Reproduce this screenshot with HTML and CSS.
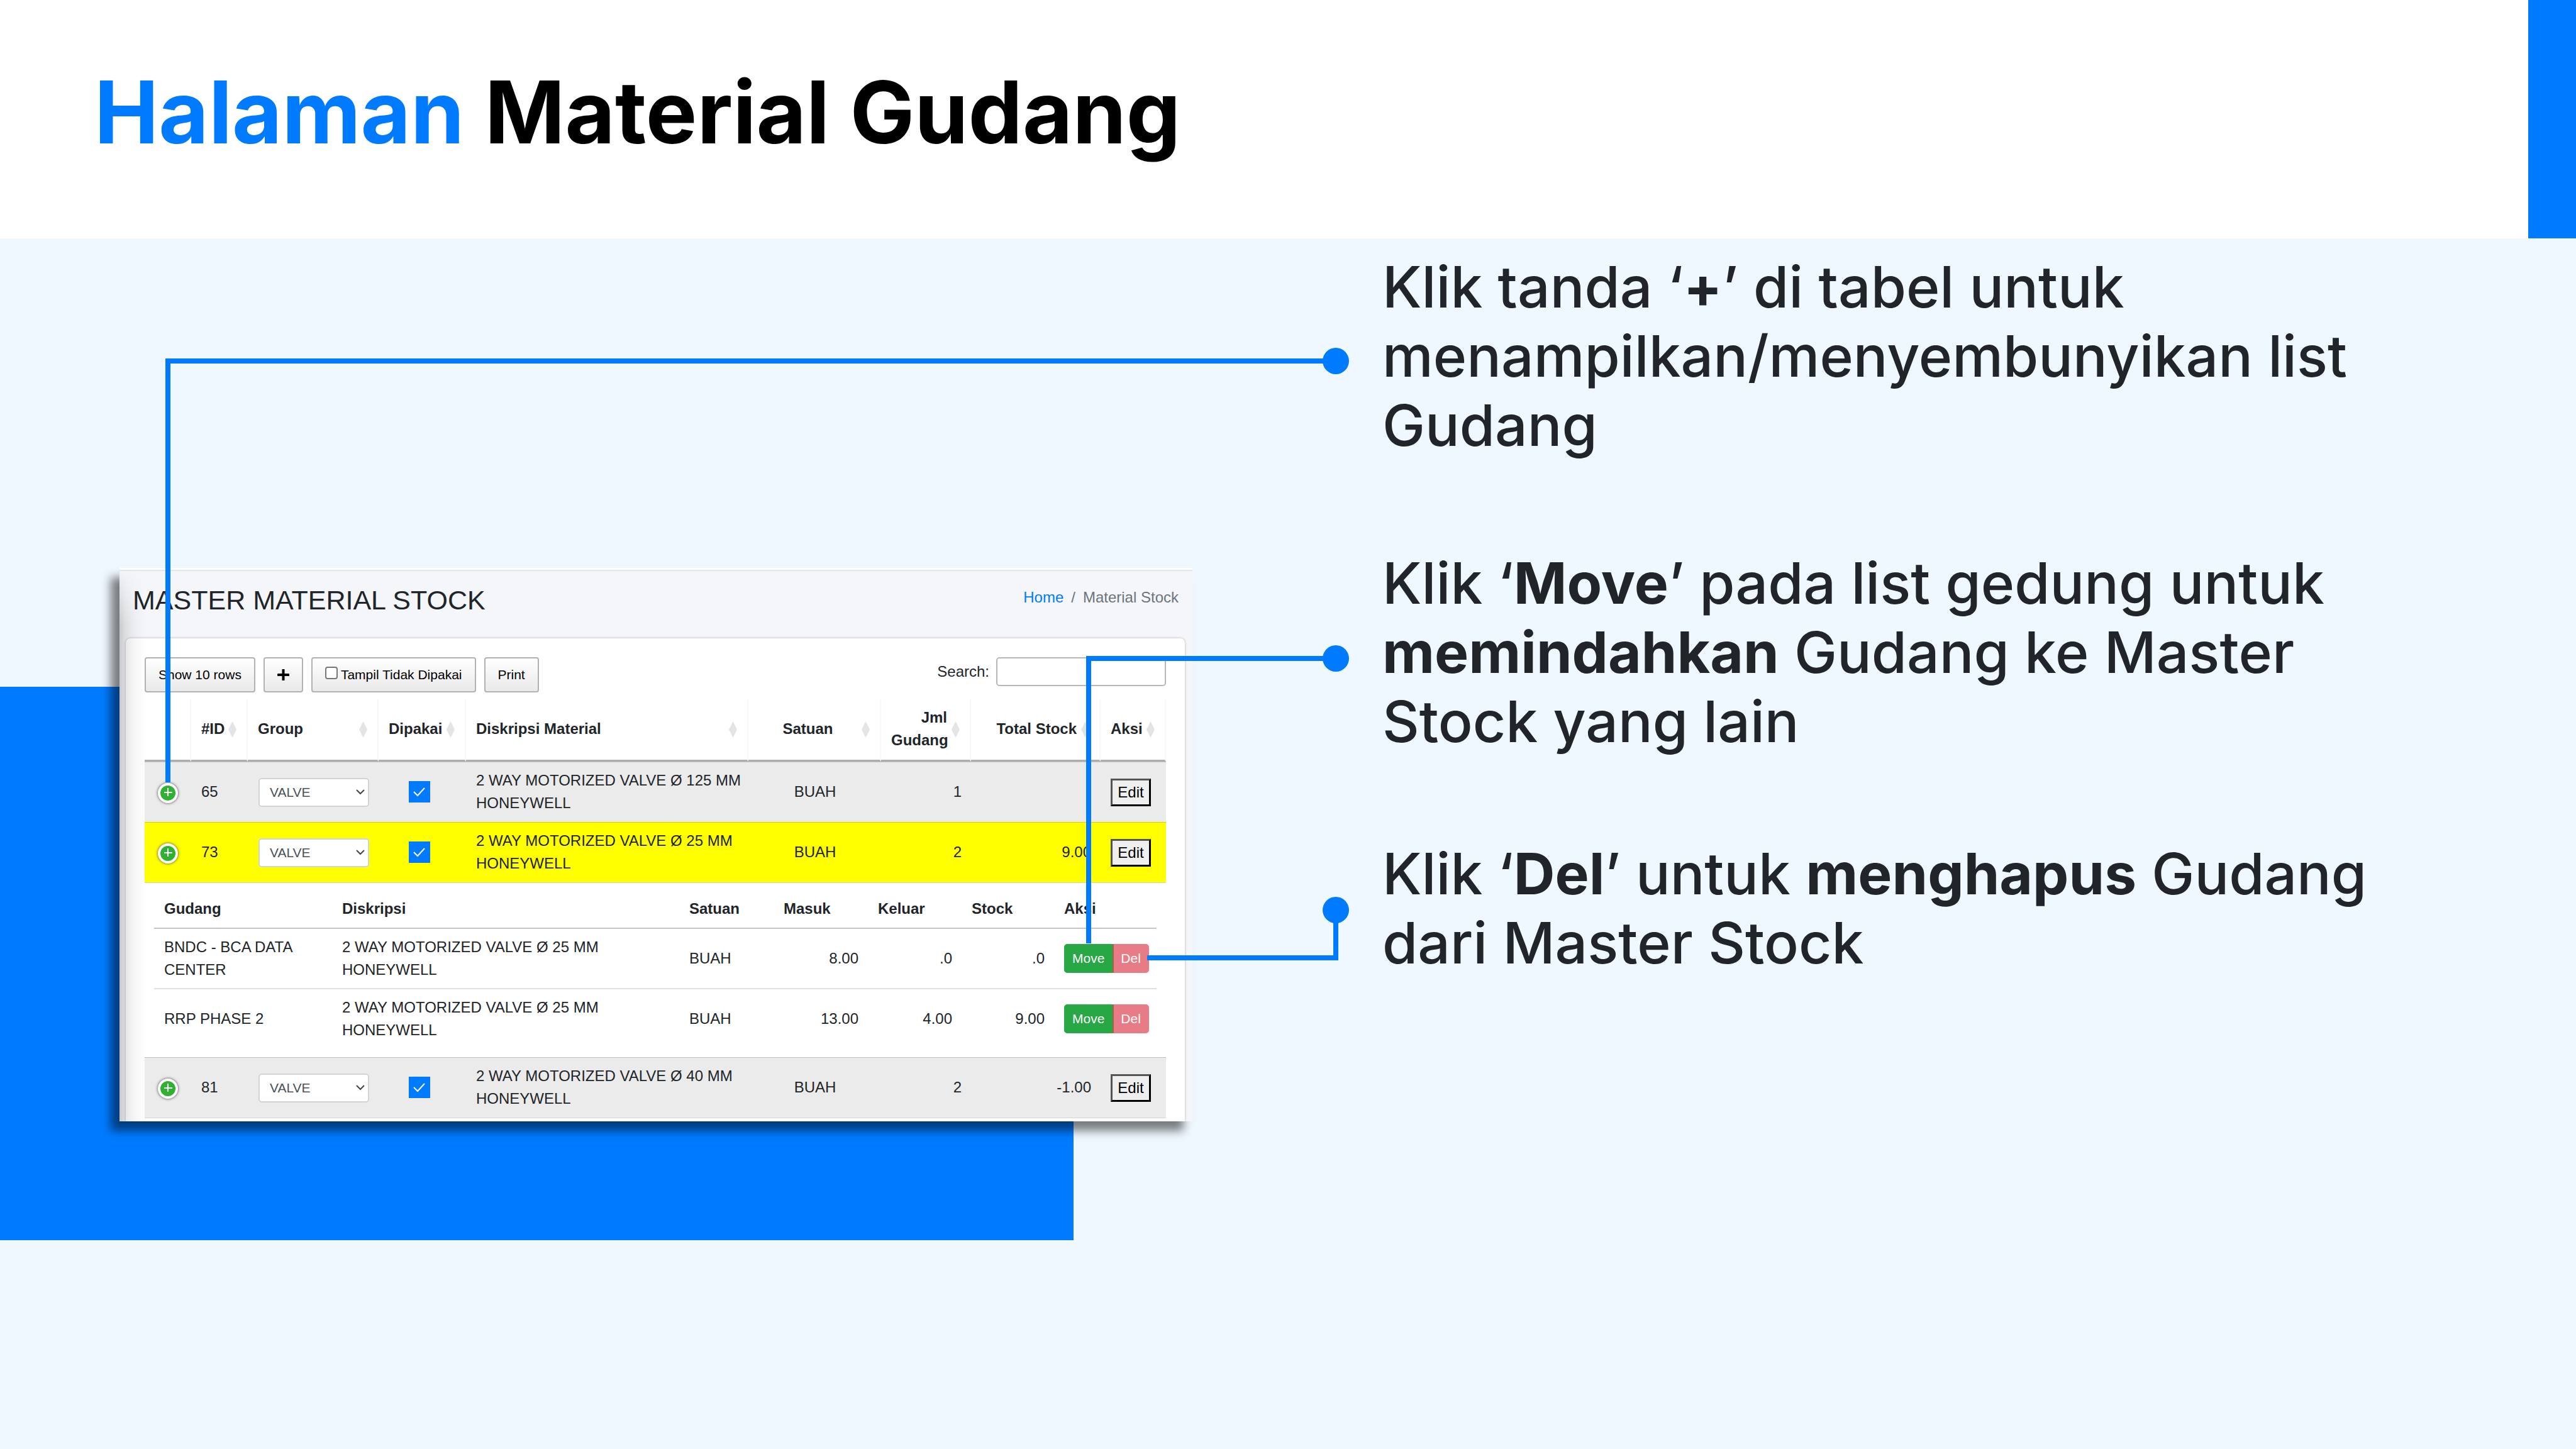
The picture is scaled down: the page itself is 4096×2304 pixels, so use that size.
FILE: index.html
```html
<!DOCTYPE html>
<html lang="id">
<head>
<meta charset="utf-8">
<title>Halaman Material Gudang</title>
<link rel="stylesheet" href="styles.css">
</head>
<body>
<div class="slide">
  <header class="slide-header">
    <h1 class="slide-title"><span class="accent">Halaman</span> Material Gudang</h1>
    <div class="header-block"></div>
  </header>

  <main class="slide-body">
    <div class="backdrop"></div>

    <section class="app">
      <div class="app-header">
        <h2 class="app-title">MASTER MATERIAL STOCK</h2>
        <nav class="breadcrumb" aria-label="Breadcrumb">
          <a href="#">Home</a><span>/</span><span>Material Stock</span>
        </nav>
      </div>

      <div class="card">
        <div class="toolbar">
          <div class="tools">
            <button class="tool" type="button">Show 10 rows</button>
            <button class="tool" type="button" aria-label="Tambah"><svg class="plus" viewBox="0 0 18 18"><path d="M9 1v16M1 9h16" stroke="#000" stroke-width="4" stroke-linecap="round"/></svg></button>
            <label class="tool"><input class="tool-check" type="checkbox">Tampil Tidak Dipakai</label>
            <button class="tool" type="button">Print</button>
          </div>
          <label class="search">Search:<input class="search-input" type="search"></label>
        </div>

        <table class="stock">
          <colgroup>
            <col class="c-toggle"><col class="c-id"><col class="c-group"><col class="c-used"><col class="c-desc"><col class="c-unit"><col class="c-count"><col class="c-total"><col class="c-action">
          </colgroup>
          <thead>
            <tr>
              <th></th>
              <th class="sortable">#ID</th>
              <th class="sortable">Group</th>
              <th class="sortable">Dipakai</th>
              <th class="sortable">Diskripsi Material</th>
              <th class="sortable center">Satuan</th>
              <th class="sortable right">Jml Gudang</th>
              <th class="sortable right">Total Stock</th>
              <th class="sortable">Aksi</th>
            </tr>
          </thead>
          <tbody>
            <tr class="shaded">
              <td class="toggle-cell"><button class="toggle" type="button" aria-label="Tampilkan gudang"><svg viewBox="0 0 24 24"><path d="M12 4v13M6 11h13" stroke="#fff" stroke-width="2"/></svg></button></td>
              <td>65</td>
              <td class="tight"><select class="group-select" aria-label="Group"><option>VALVE</option></select></td>
              <td class="used-cell"><input class="used" type="checkbox" checked aria-label="Dipakai"></td>
              <td class="desc">2 WAY MOTORIZED VALVE Ø 125 MM HONEYWELL</td>
              <td class="center">BUAH</td>
              <td class="right">1</td>
              <td class="right"></td>
              <td class="tight"><button class="edit" type="button">Edit</button></td>
            </tr>
            <tr class="selected">
              <td class="toggle-cell"><button class="toggle" type="button" aria-label="Tampilkan gudang"><svg viewBox="0 0 24 24"><path d="M12 4v13M6 11h13" stroke="#fff" stroke-width="2"/></svg></button></td>
              <td>73</td>
              <td class="tight"><select class="group-select" aria-label="Group"><option>VALVE</option></select></td>
              <td class="used-cell"><input class="used" type="checkbox" checked aria-label="Dipakai"></td>
              <td class="desc">2 WAY MOTORIZED VALVE Ø 25 MM HONEYWELL</td>
              <td class="center">BUAH</td>
              <td class="right">2</td>
              <td class="right">9.00</td>
              <td class="tight"><button class="edit" type="button">Edit</button></td>
            </tr>
            <tr>
              <td class="detail" colspan="9">
                <table class="depots">
                  <colgroup>
                    <col class="d-depot"><col class="d-desc"><col class="d-unit"><col class="d-in"><col class="d-out"><col class="d-stock"><col class="d-action">
                  </colgroup>
                  <thead>
                    <tr><th>Gudang</th><th>Diskripsi</th><th>Satuan</th><th>Masuk</th><th>Keluar</th><th>Stock</th><th>Aksi</th></tr>
                  </thead>
                  <tbody>
                    <tr>
                      <td>BNDC - BCA DATA CENTER</td>
                      <td class="narrow">2 WAY MOTORIZED VALVE Ø 25 MM HONEYWELL</td>
                      <td>BUAH</td>
                      <td class="right">8.00</td>
                      <td class="right">.0</td>
                      <td class="right">.0</td>
                      <td class="tight"><div class="pair"><button class="move" type="button">Move</button><button class="del" type="button">Del</button></div></td>
                    </tr>
                    <tr>
                      <td>RRP PHASE 2</td>
                      <td class="narrow">2 WAY MOTORIZED VALVE Ø 25 MM HONEYWELL</td>
                      <td>BUAH</td>
                      <td class="right">13.00</td>
                      <td class="right">4.00</td>
                      <td class="right">9.00</td>
                      <td class="tight"><div class="pair"><button class="move" type="button">Move</button><button class="del" type="button">Del</button></div></td>
                    </tr>
                  </tbody>
                </table>
              </td>
            </tr>
            <tr class="shaded last">
              <td class="toggle-cell"><button class="toggle" type="button" aria-label="Tampilkan gudang"><svg viewBox="0 0 24 24"><path d="M12 4v13M6 11h13" stroke="#fff" stroke-width="2"/></svg></button></td>
              <td>81</td>
              <td class="tight"><select class="group-select" aria-label="Group"><option>VALVE</option></select></td>
              <td class="used-cell"><input class="used" type="checkbox" checked aria-label="Dipakai"></td>
              <td class="desc">2 WAY MOTORIZED VALVE Ø 40 MM HONEYWELL</td>
              <td class="center">BUAH</td>
              <td class="right">2</td>
              <td class="right">-1.00</td>
              <td class="tight"><button class="edit" type="button">Edit</button></td>
            </tr>
          </tbody>
        </table>
      </div>
    </section>

    <section class="notes">
      <p>Klik tanda ‘<strong>+</strong>’ di tabel untuk menampilkan/menyembunyikan list Gudang</p>
      <p>Klik ‘<strong>Move</strong>’ pada list gedung untuk <strong>memindahkan</strong> Gudang ke Master Stock yang lain</p>
      <p>Klik ‘<strong>Del</strong>’ untuk <strong>menghapus</strong> Gudang dari Master Stock</p>
    </section>
  </main>

  <!-- Lines from each control to its explanation -->
  <svg class="connectors" viewBox="0 0 4096 2304" aria-hidden="true">
    <g fill="none" stroke="#007bff" stroke-width="8">
      <path d="M267 1244V574H2124"/>
      <path d="M1731 1500V1047H2124"/>
      <path d="M1824 1523H2124V1447"/>
    </g>
    <g fill="#007bff">
      <circle cx="2124" cy="574" r="21"/>
      <circle cx="2124" cy="1047" r="21"/>
      <circle cx="2124" cy="1447" r="21"/>
    </g>
  </svg>
</div>
</body>
</html>
```
FILE: styles.css
```css
* { box-sizing: border-box; }

body {
  margin: 0;
  background: #f0f8ff;
  color: #212529;
  font-family: Inter, sans-serif;
}

.slide { position: relative; min-height: 100vh; }

/* Slide header */
.slide-header {
  display: flex;
  justify-content: space-between;
  background: #fff;
}
.slide-title {
  margin: 0;
  padding: 95px 0 118px 150px;
  font-size: 137px;
  line-height: 166px;
  font-weight: 700;
  color: #000;
}
.accent { color: #007bff; }
.header-block { width: 76px; background: #007bff; }

/* Slide body: left margin, app view, gutter, notes */
.slide-body {
  position: relative;
  display: grid;
  grid-template-columns: 190fr 1706fr 302fr 1898fr;
  align-items: start;
}
.backdrop {
  position: absolute;
  left: 0;
  top: 713px;
  width: 41.67%;
  height: 880px;
  background: #007bff;
}

.notes {
  grid-column: 4;
  max-width: 1640px;
  padding-top: 22px;
  font-size: 91px;
  line-height: 110px;
  font-weight: 500;
}
.notes p { margin: 0 0 132px; }
.notes p:first-child { margin-bottom: 141px; }
.notes strong { font-weight: 700; }

/* App view */
.app {
  position: relative;
  grid-column: 2;
  margin-top: 524px;
  background: #f4f6f9;
  box-shadow: -14px 15px 14px rgba(0, 0, 0, .5);
  font-family: "Liberation Sans", Arial, sans-serif;
  font-size: 24px;
  line-height: 36px;
}
.app::after {
  content: "";
  position: absolute;
  left: 0;
  top: 0;
  bottom: 0;
  width: 42px;
  background: linear-gradient(to right, rgba(0, 0, 0, .18), rgba(0, 0, 0, .09) 10px, rgba(0, 0, 0, .03) 25px, transparent);
  mask-image: linear-gradient(to bottom, transparent, #000 90px);
  pointer-events: none;
}
.app-header {
  display: flex;
  justify-content: space-between;
  align-items: flex-start;
  padding: 22px 22px 35px 21px;
  border-top: 3px solid #fff;
  box-shadow: inset 0 2px #e4e7eb;
}
.app-title { margin: 0; font-size: 43px; line-height: 52px; font-weight: 400; }
.breadcrumb { display: flex; gap: 12px; margin-top: 4px; color: #6c757d; }
.breadcrumb a { color: #007bff; text-decoration: none; }

.card {
  margin: 0 12px 0 10px;
  padding: 30px 30px 5px;
  background: #fff;
  border-radius: 7px 7px 0 0;
  box-shadow: 0 0 3px rgba(0, 0, 0, .2), 0 0 5px rgba(0, 0, 0, .1);
  clip-path: inset(-5px -5px 0);
}

.toolbar { display: flex; justify-content: space-between; align-items: flex-start; margin-bottom: 11px; }
.tools { display: flex; gap: 13px; }
.tool {
  height: 56px;
  padding: 0 20px;
  border: 2px solid #b2b2b2;
  border-radius: 4px;
  background: linear-gradient(to bottom, #fff, #e9e9e9);
  color: #000;
  font: 21px/52px "Liberation Sans", Arial, sans-serif;
}
.plus { display: block; width: 19px; height: 18px; fill: none; }
.tool-check {
  appearance: none;
  width: 20px;
  height: 20px;
  margin: 0 5px 0 0;
  border: 2px solid #767676;
  border-radius: 4px;
  background: #fff;
}
.search { display: flex; align-items: center; gap: 11px; }
.search-input {
  width: 270px;
  height: 46px;
  border: 2px solid #b8b8b8;
  border-radius: 5px;
  background: #fff;
}

/* Stock table */
.stock, .depots { width: 100%; table-layout: fixed; border-collapse: separate; border-spacing: 0; }
.stock th, .stock td { text-align: left; vertical-align: middle; }
.stock th.center, .stock td.center { text-align: center; }
.stock th.right, .stock td.right { text-align: right; }

.c-toggle { width: 74px; }
.c-id { width: 90px; }
.c-group { width: 208px; }
.c-used { width: 139px; }
.c-desc { width: 449px; }
.c-unit { width: 211px; }
.c-count { width: 143px; }
.c-total { width: 206px; }
.c-action { width: 104px; }

.stock th {
  position: relative;
  padding: 11px 0 13px 16px;
  border-right: 2px solid #f8f8f8;
  border-bottom: 3px solid #adadad;
}
.stock th.sortable { padding-right: 36px; }
.sortable::after {
  content: "";
  position: absolute;
  right: 16px;
  top: 50%;
  width: 13px;
  height: 26px;
  margin-top: -13px;
  background: #e2e5e4;
  clip-path: polygon(50% 0, 100% 50%, 50% 100%, 0 50%);
}
.stock td {
  padding: 11px 15px 12px 16px;
  border-top: 1px solid rgba(0, 0, 0, .18);
}
.shaded td { background: #ebebeb; }
.selected td { background: #ff0; }
.last td { border-bottom: 1px solid #d4d4d4; }
.stock td.desc { padding-right: 0; }
.stock td.tight { padding-top: 0; padding-bottom: 0; }
.stock td.toggle-cell { padding: 2px 0 0; text-align: center; }
.stock td.used-cell { padding: 0 10px 0 0; }

.toggle {
  display: block;
  width: 32px;
  height: 32px;
  margin: 0 auto;
  padding: 0;
  border: 4px solid #fff;
  border-radius: 50%;
  background: #31b131;
  box-shadow: 0 0 4px #444;
}
.toggle svg { display: block; width: 24px; height: 24px; }

.group-select {
  appearance: none;
  display: block;
  width: 176px;
  height: 46px;
  margin-left: 1px;
  padding: 0 16px;
  border: 2px solid #ced4da;
  border-radius: 5px;
  background: #fff url("data:image/svg+xml,%3Csvg xmlns='http://www.w3.org/2000/svg' viewBox='0 0 14 9'%3E%3Cpath d='M1 1l6 6 6-6' fill='none' stroke='%23444' stroke-width='2'/%3E%3C/svg%3E") no-repeat right 5px center / 14px 9px;
  color: #495057;
  font: 21px "Liberation Sans", Arial, sans-serif;
}
.used {
  appearance: none;
  display: block;
  width: 34px;
  height: 34px;
  margin: 0 auto 2px;
  background: #007bff url("data:image/svg+xml,%3Csvg xmlns='http://www.w3.org/2000/svg' viewBox='0 0 34 34'%3E%3Cpath d='M8 17l6 6L25 11' fill='none' stroke='%23fff' stroke-width='2'/%3E%3C/svg%3E");
}
.edit {
  display: block;
  width: 64px;
  height: 44px;
  padding: 0;
  border: 3px solid #000;
  border-top-color: #555;
  border-left-color: #555;
  background: #efefef;
  color: #000;
  font: 24px "Liberation Sans", Arial, sans-serif;
}

/* Expanded row */
.stock td.detail { padding: 11px 15px 12px; }
.d-depot { width: 283px; }
.d-desc { width: 552px; }
.d-unit { width: 150px; }
.d-in { width: 150px; }
.d-out { width: 149px; }
.d-stock { width: 147px; }
.d-action { width: 163px; }
.depots th { padding: 12px 15px 12px 16px; border-right: 0; border-bottom: 2px solid #c4c6c8; }
.depots td { padding: 11px 15px 11px 16px; border-top: 0; border-bottom: 2px solid #dfe1e3; }
.depots tr:last-child td { border-bottom-color: transparent; }
.depots td.narrow { padding-right: 110px; }

.pair { display: flex; }
.move, .del {
  height: 46px;
  padding: 0 13px;
  border: 0;
  color: #fff;
  font: 21px "Liberation Sans", Arial, sans-serif;
}
.move { border-radius: 5px 0 0 5px; background: #28a745; }
.del { border-radius: 0 5px 5px 0; background: #e77c86; box-shadow: inset 2px 0 #a8604a; }

.connectors {
  position: absolute;
  left: 0;
  top: 0;
  width: 100%;
  pointer-events: none;
}
```
